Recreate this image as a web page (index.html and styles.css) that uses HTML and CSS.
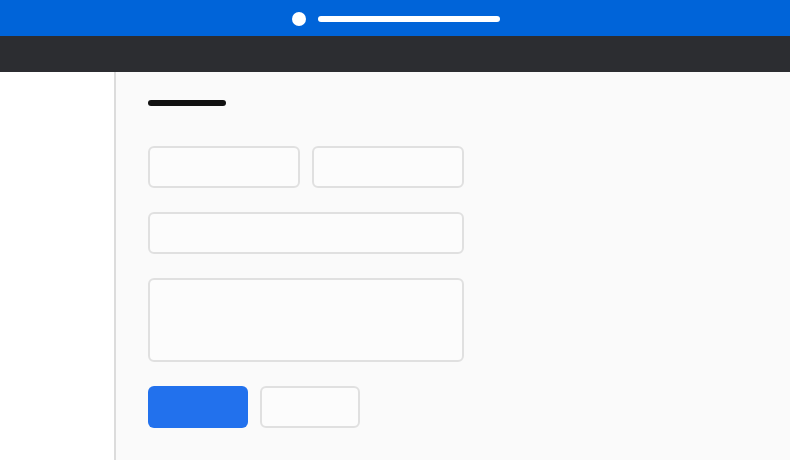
FILE: index.html
```html
<!DOCTYPE html>
<html lang="en">
<head>
    <meta charset="UTF-8">
    <meta name="viewport" content="width=device-width, initial-scale=1.0">
    <title>Form</title>
    <link rel="stylesheet" href="styles.css">
</head>
<body>
    <div class="topBar">
        <span class="logoDot"></span>
        <span class="logoLine"></span>
    </div>
    <div class="navBar"></div>
    <div class="layout">
        <div class="sidebar"></div>
        <div class="main">
            <div class="title"></div>
            <div class="form">
                <div class="row">
                    <div class="field half"></div>
                    <div class="field half"></div>
                </div>
                <div class="field full"></div>
                <div class="field area"></div>
                <div class="actions">
                    <button class="btn primary"></button>
                    <button class="btn secondary"></button>
                </div>
            </div>
        </div>
    </div>
</body>
</html>
```

FILE: styles.css
```css
* {
    margin: 0;
    padding: 0;
    box-sizing: border-box;
    font-family: "Liberation Sans", Arial, sans-serif;
}

body {
    height: 460px;
    overflow: hidden;
    background-color: #fafafa;
}

.topBar {
    height: 36px;
    background-color: #0064d9;
    display: flex;
    align-items: center;
    justify-content: center;
    gap: 12px;
    padding-left: 2px;
    padding-top: 2px;
}

.logoDot {
    width: 14px;
    height: 14px;
    border-radius: 50%;
    background-color: #fff;
}

.logoLine {
    width: 182px;
    height: 6px;
    border-radius: 3px;
    background-color: #fff;
}

.navBar {
    height: 36px;
    background-color: #2c2d31;
}

.layout {
    display: flex;
    height: 388px;
}

.sidebar {
    width: 116px;
    background-color: #fff;
    border-right: 2px solid #dcdcdc;
}

.main {
    flex: 1;
    background-color: #fafafa;
    padding: 28px 32px;
}

.title {
    width: 78px;
    height: 6px;
    border-radius: 3px;
    background-color: #111;
}

.form {
    margin-top: 40px;
    width: 316px;
    display: flex;
    flex-direction: column;
    gap: 24px;
}

.row {
    display: flex;
    gap: 12px;
}

.field {
    height: 42px;
    border: 2px solid #e0e0e0;
    border-radius: 6px;
    background-color: #fcfcfc;
}

.half {
    flex: 1;
}

.area {
    height: 84px;
}

.actions {
    display: flex;
    gap: 12px;
}

.btn {
    width: 100px;
    height: 42px;
    border-radius: 6px;
}

.primary {
    background-color: #2271ed;
    border: none;
}

.secondary {
    background-color: #fcfcfc;
    border: 2px solid #e0e0e0;
}
```
